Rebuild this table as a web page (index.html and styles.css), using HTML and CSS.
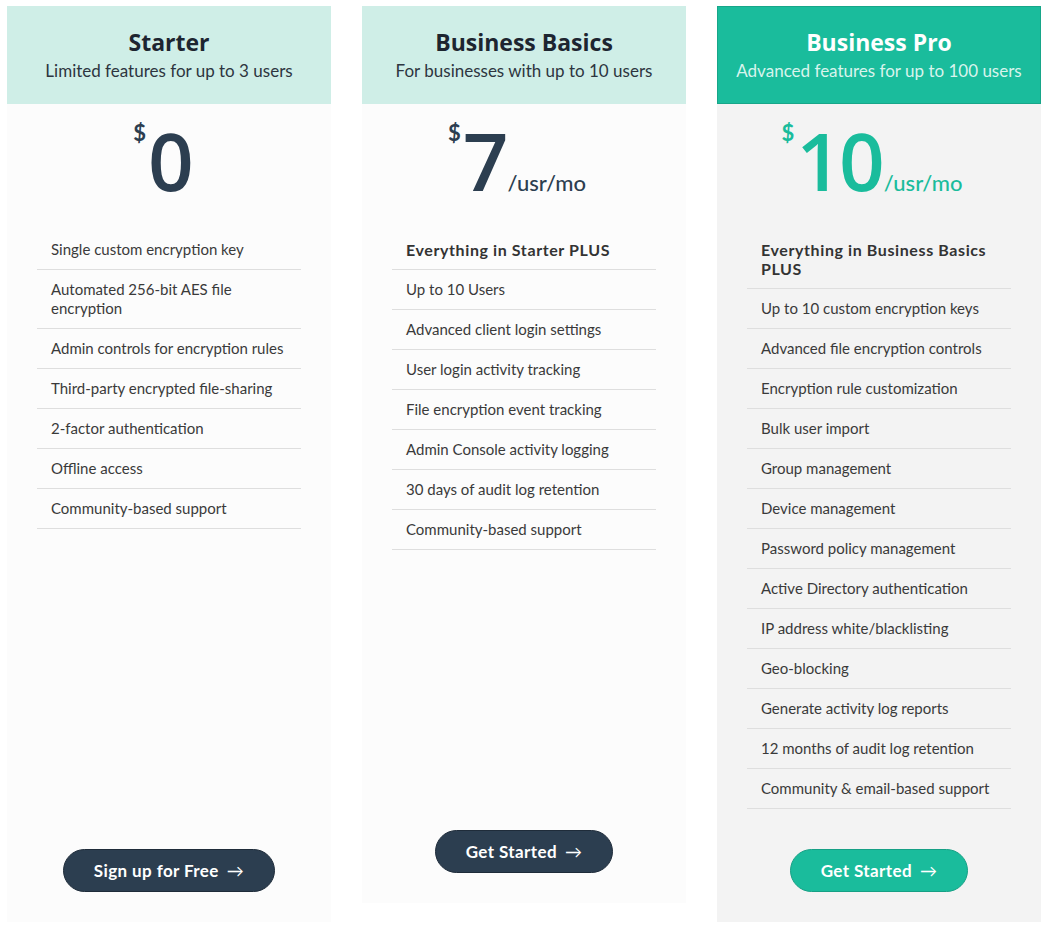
FILE: index.html
```html
<!DOCTYPE html>
<html lang="en">
<head>
<meta charset="utf-8">
<title>Pricing</title>
<link rel="stylesheet" href="styles.css">
</head>
<body>
<div class="plans">
  <section class="card">
    <header class="card-head">
      <h2 class="title">Starter</h2>
      <p class="subtitle">Limited features for up to 3 users</p>
    </header>
    <div class="price">
      <span class="cur">$</span><span class="amount">0</span>
    </div>
    <ul class="features">
      <li>Single custom encryption key</li>
      <li>Automated 256-bit AES file encryption</li>
      <li>Admin controls for encryption rules</li>
      <li>Third-party encrypted file-sharing</li>
      <li>2-factor authentication</li>
      <li>Offline access</li>
      <li>Community-based support</li>
    </ul>
    <div class="cta"><a class="btn" href="#">Sign up for Free <span class="arrow">→</span></a></div>
  </section>

  <section class="card card-short">
    <header class="card-head">
      <h2 class="title">Business Basics</h2>
      <p class="subtitle">For businesses with up to 10 users</p>
    </header>
    <div class="price">
      <span class="cur">$</span><span class="amount">7</span><span class="per">/usr/mo</span>
    </div>
    <ul class="features">
      <li class="lead">Everything in Starter PLUS</li>
      <li>Up to 10 Users</li>
      <li>Advanced client login settings</li>
      <li>User login activity tracking</li>
      <li>File encryption event tracking</li>
      <li>Admin Console activity logging</li>
      <li>30 days of audit log retention</li>
      <li>Community-based support</li>
    </ul>
    <div class="cta"><a class="btn" href="#">Get Started <span class="arrow">→</span></a></div>
  </section>

  <section class="card card-pro">
    <header class="card-head">
      <h2 class="title">Business Pro</h2>
      <p class="subtitle">Advanced features for up to 100 users</p>
    </header>
    <div class="price">
      <span class="cur">$</span><span class="amount">10</span><span class="per">/usr/mo</span>
    </div>
    <ul class="features">
      <li class="lead">Everything in Business Basics PLUS</li>
      <li>Up to 10 custom encryption keys</li>
      <li>Advanced file encryption controls</li>
      <li>Encryption rule customization</li>
      <li>Bulk user import</li>
      <li>Group management</li>
      <li>Device management</li>
      <li>Password policy management</li>
      <li>Active Directory authentication</li>
      <li>IP address white/blacklisting</li>
      <li>Geo-blocking</li>
      <li>Generate activity log reports</li>
      <li>12 months of audit log retention</li>
      <li>Community &amp; email-based support</li>
    </ul>
    <div class="cta"><a class="btn" href="#">Get Started <span class="arrow">→</span></a></div>
  </section>
</div>
</body>
</html>
```

FILE: styles.css
```css
* { box-sizing: border-box; }
html, body { margin: 0; padding: 0; background: #ffffff; }
body {
  font-family: "Lato", "Liberation Sans", sans-serif;
  color: #333;
}
.plans {
  display: grid;
  grid-template-columns: repeat(3, 324px);
  column-gap: 31px;
  padding: 6px 0 11px 7px;
  align-items: stretch;
}
.card {
  display: flex;
  flex-direction: column;
  background: #fcfcfc;
}
.card-short { margin-bottom: 19px; }
.card-pro { background: #f3f3f3; }

.card-head {
  background: #cfeee7;
  height: 98px;
  text-align: center;
  padding-top: 22px;
}
.card-pro .card-head {
  background: #1abc9c;
  border: 1px solid #17a689;
  padding-top: 21px;
}
.title {
  margin: 0;
  font-family: "Open Sans", "Noto Sans", sans-serif;
  font-weight: 700;
  font-size: 23px;
  line-height: 28px;
  color: #1d2530;
}
.subtitle {
  margin: 3px 0 0;
  font-size: 17px;
  line-height: 24px;
  color: #2d3540;
}
.card-pro .title { color: #ffffff; }
.card-pro .subtitle { color: #d8f4ed; }

.price {
  height: 126px;
  display: flex;
  justify-content: center;
  align-items: flex-start;
  padding: 16px 14px 0 0;
  color: #2c3e50;
}
.card-pro .price { color: #1abc9c; }
.cur {
  font-size: 22px;
  font-weight: 700;
  line-height: 1;
  margin-top: 2px;
  margin-right: 2px;
}
.amount {
  font-family: "Open Sans", "Noto Sans", sans-serif;
  font-size: 80px;
  line-height: 80px;
  font-weight: 600;
  font-stretch: 93%;
  letter-spacing: -3px;
}
.per {
  align-self: flex-end;
  font-size: 22px;
  line-height: 1;
  font-weight: 500;
  margin-bottom: 36px;
  margin-left: 2px;
}

.features {
  list-style: none;
  margin: 0 30px;
  padding: 0;
}
.features li {
  padding: 10px 14px;
  font-size: 15px;
  line-height: 19px;
  color: #3a3a3a;
  border-bottom: 1px solid #dedede;
}
.features li.lead {
  font-size: 16px;
  font-weight: 700;
  letter-spacing: 0.6px;
  color: #333;
}

.cta {
  margin-top: auto;
  padding: 40px 0 30px;
  display: flex;
  justify-content: center;
}
.btn {
  display: inline-flex;
  align-items: center;
  height: 43px;
  padding: 0 30px;
  border-radius: 22px;
  background: #2c3e50;
  border: 1px solid #1f2c3a;
  color: #ffffff;
  text-decoration: none;
  font-weight: 700;
  font-size: 17px;
  letter-spacing: 0.4px;
}
.card-pro .btn {
  background: #1abc9c;
  border-color: #16a085;
}
.arrow {
  margin-left: 8px;
  font-weight: 400;
}
```
